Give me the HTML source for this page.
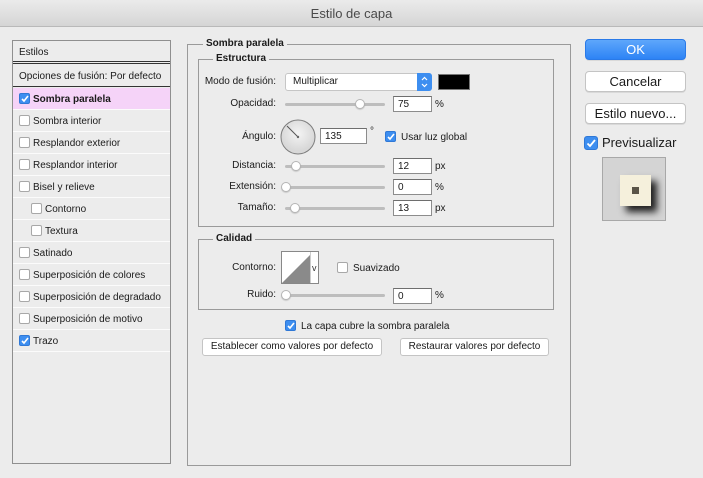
<!DOCTYPE html>
<html><head><meta charset="utf-8">
<style>
*{box-sizing:border-box;margin:0;padding:0}
body{width:703px;height:478px;background:#ececec;font-family:"Liberation Sans",sans-serif;font-size:10px;color:#1a1a1a;position:relative;overflow:hidden}
.title{position:absolute;left:0;top:0;width:703px;height:27px;background:linear-gradient(#ebebeb,#d5d5d5);border-bottom:1px solid #b9b9b9;text-align:center;line-height:27px;font-size:13px;color:#4a4a4a}
.left{position:absolute;left:12px;top:40px;width:159px;height:424px;border:1px solid #8f8f8f;background:#ececec}
.row{position:absolute;left:0;width:157px;height:22px;line-height:23px;border-bottom:1px solid #fbfbfb;padding-left:6px;font-size:10px}
.cb{display:inline-block;width:11px;height:11px;border:1px solid #a8a8a8;border-radius:2px;background:#fff;vertical-align:-2px;margin-right:3px;position:relative}
.cb.on{background:#3d8ef0;border-color:#2f78d6}
.cb.on svg{position:absolute;left:0;top:0}
.a{position:absolute !important}
.box{border:1px solid #9a9a9a}
.lg{position:absolute;background:#ececec;padding:0 3px;font-weight:bold;font-size:10px;line-height:12px}
.lbl{position:absolute;text-align:right;width:80px;font-size:10px;line-height:12px}
.track{position:absolute;height:3px;background:#bdbdbd;border-radius:2px}
.thumb{position:absolute;width:10px;height:10px;border-radius:50%;background:#fff;border:1px solid #b5b5b5;box-shadow:0 1px 1px rgba(0,0,0,.15)}
.inp{position:absolute;height:16px;background:#fff;border:1px solid #8c8c8c;border-top-color:#6e6e6e;font-size:10px;line-height:15px;padding-left:4px}
.unit{position:absolute;font-size:10px;line-height:12px}
.btn{position:absolute;height:21px;background:#fff;border:1px solid #c4c4c4;border-radius:4px;text-align:center;font-size:13px;line-height:19px;box-shadow:0 1px 0 rgba(0,0,0,.08)}
.sbtn{position:absolute;height:18px;background:#fff;border:1px solid #c4c4c4;border-radius:3px;text-align:center;font-size:10px;line-height:16px}
</style></head><body>
<div class="title">Estilo de capa</div>

<div class="left">
  <div class="row" style="top:0;height:23px;border-bottom:3px double #333">Estilos</div>
  <div class="row" style="top:24px;border-bottom:1px solid #333">Opciones de fusión: Por defecto</div>
  <div class="row" style="top:47px;background:#f5d3f8;font-weight:bold"><span class="cb on"><svg width="9" height="9"><polyline points="2,5 4,7 8,2" fill="none" stroke="#fff" stroke-width="1.6"/></svg></span>Sombra paralela</div>
  <div class="row" style="top:69px"><span class="cb"></span>Sombra interior</div>
  <div class="row" style="top:91px"><span class="cb"></span>Resplandor exterior</div>
  <div class="row" style="top:113px"><span class="cb"></span>Resplandor interior</div>
  <div class="row" style="top:135px"><span class="cb"></span>Bisel y relieve</div>
  <div class="row" style="top:157px;padding-left:18px"><span class="cb"></span>Contorno</div>
  <div class="row" style="top:179px;padding-left:18px"><span class="cb"></span>Textura</div>
  <div class="row" style="top:201px"><span class="cb"></span>Satinado</div>
  <div class="row" style="top:223px"><span class="cb"></span>Superposición de colores</div>
  <div class="row" style="top:245px"><span class="cb"></span>Superposición de degradado</div>
  <div class="row" style="top:267px"><span class="cb"></span>Superposición de motivo</div>
  <div class="row" style="top:289px"><span class="cb on"><svg width="9" height="9"><polyline points="2,5 4,7 8,2" fill="none" stroke="#fff" stroke-width="1.6"/></svg></span>Trazo</div>
</div>

<div class="a box" style="left:187px;top:44px;width:384px;height:422px"></div>
<div class="lg" style="left:203px;top:38px">Sombra paralela</div>
<div class="a box" style="left:198px;top:59px;width:356px;height:168px"></div>
<div class="lg" style="left:213px;top:53px">Estructura</div>

<div class="lbl" style="left:196px;top:76px">Modo de fusión:</div>
<div class="a" style="left:285px;top:73px;width:147px;height:18px;background:#fff;border:1px solid #c6c6c6;border-radius:3px;font-size:10px;line-height:16px;padding-left:7px">Multiplicar</div>
<div class="a" style="left:417px;top:73px;width:15px;height:18px;background:#3d8ef0;border-radius:0 3px 3px 0"><svg width="15" height="18"><polyline points="5,7 7.5,4.5 10,7" fill="none" stroke="#fff" stroke-width="1.2"/><polyline points="5,11 7.5,13.5 10,11" fill="none" stroke="#fff" stroke-width="1.2"/></svg></div>
<div class="a" style="left:438px;top:74px;width:32px;height:16px;background:#000;border:1px solid #777"></div>

<div class="lbl" style="left:196px;top:98px">Opacidad:</div>
<div class="track" style="left:285px;top:103px;width:100px"></div>
<div class="thumb" style="left:355px;top:99px"></div>
<div class="inp" style="left:393px;top:96px;width:39px">75</div>
<div class="unit" style="left:435px;top:99px">%</div>

<div class="lbl" style="left:196px;top:131px">Ángulo:</div>
<svg class="a" style="left:279px;top:118px" width="38" height="38"><defs><radialGradient id="g" cx="50%" cy="40%"><stop offset="0" stop-color="#f4f4f4"/><stop offset="1" stop-color="#d8d8d8"/></radialGradient></defs><circle cx="19" cy="19" r="17" fill="url(#g)" stroke="#7d7d7d" stroke-width="1"/><line x1="19" y1="19" x2="8" y2="8" stroke="#555" stroke-width="1"/><circle cx="19" cy="19" r="1.2" fill="#666"/></svg>
<div class="inp" style="left:320px;top:128px;width:47px">135</div>
<div class="unit" style="left:370px;top:126px">°</div>
<span class="cb on a" style="left:385px;top:131px;width:11px;height:11px"><svg width="9" height="9"><polyline points="2,5 4,7 8,2" fill="none" stroke="#fff" stroke-width="1.6"/></svg></span>
<div class="unit" style="left:401px;top:132px">Usar luz global</div>

<div class="lbl" style="left:196px;top:160px">Distancia:</div>
<div class="track" style="left:285px;top:165px;width:100px"></div>
<div class="thumb" style="left:291px;top:161px"></div>
<div class="inp" style="left:393px;top:158px;width:39px">12</div>
<div class="unit" style="left:435px;top:161px">px</div>

<div class="lbl" style="left:196px;top:181px">Extensión:</div>
<div class="track" style="left:285px;top:186px;width:100px"></div>
<div class="thumb" style="left:281px;top:182px"></div>
<div class="inp" style="left:393px;top:179px;width:39px">0</div>
<div class="unit" style="left:435px;top:182px">%</div>

<div class="lbl" style="left:196px;top:202px">Tamaño:</div>
<div class="track" style="left:285px;top:207px;width:100px"></div>
<div class="thumb" style="left:290px;top:203px"></div>
<div class="inp" style="left:393px;top:200px;width:39px">13</div>
<div class="unit" style="left:435px;top:203px">px</div>

<div class="a box" style="left:198px;top:239px;width:356px;height:71px"></div>
<div class="lg" style="left:213px;top:233px">Calidad</div>
<div class="lbl" style="left:196px;top:262px">Contorno:</div>
<svg class="a" style="left:281px;top:251px" width="38" height="33"><rect x="0.5" y="0.5" width="37" height="32" fill="#fff" stroke="#888"/><polygon points="1,32 29,4 29,32" fill="#8a8a8a"/><line x1="29.5" y1="1" x2="29.5" y2="32" stroke="#ccc"/><text x="31" y="20" font-size="9" font-family="Liberation Sans" fill="#333">v</text></svg>
<span class="cb a" style="left:337px;top:262px;width:11px;height:11px"></span>
<div class="unit" style="left:353px;top:263px">Suavizado</div>

<div class="lbl" style="left:196px;top:289px">Ruido:</div>
<div class="track" style="left:285px;top:294px;width:100px"></div>
<div class="thumb" style="left:281px;top:290px"></div>
<div class="inp" style="left:393px;top:288px;width:39px">0</div>
<div class="unit" style="left:435px;top:290px">%</div>

<span class="cb on a" style="left:285px;top:320px;width:11px;height:11px"><svg width="9" height="9"><polyline points="2,5 4,7 8,2" fill="none" stroke="#fff" stroke-width="1.6"/></svg></span>
<div class="unit" style="left:301px;top:321px">La capa cubre la sombra paralela</div>
<div class="sbtn" style="left:202px;top:338px;width:180px">Establecer como valores por defecto</div>
<div class="sbtn" style="left:400px;top:338px;width:149px">Restaurar valores por defecto</div>

<div class="btn" style="left:585px;top:39px;width:101px;background:linear-gradient(#5ea7fb,#2d83f5);border-color:#2a7ae8;color:#fff">OK</div>
<div class="btn" style="left:585px;top:71px;width:101px">Cancelar</div>
<div class="btn" style="left:585px;top:103px;width:101px">Estilo nuevo...</div>
<span class="cb on a" style="left:584px;top:136px;width:14px;height:14px;border-radius:3px"><svg width="12" height="12"><polyline points="2.5,6.5 5,9 10,3" fill="none" stroke="#fff" stroke-width="1.8"/></svg></span>
<div class="a" style="left:602px;top:135px;font-size:13px">Previsualizar</div>
<div class="a" style="left:602px;top:157px;width:64px;height:64px;background:#d4d4d4;border:1px solid #a8a8a8;overflow:hidden">
  <div class="a" style="left:17px;top:17px;width:31px;height:31px;background:#f5f0dc;box-shadow:6px 6px 7px rgba(0,0,0,.85)"></div>
  <div class="a" style="left:29px;top:29px;width:7px;height:7px;background:#5a5448"></div>
</div>
</body></html>
